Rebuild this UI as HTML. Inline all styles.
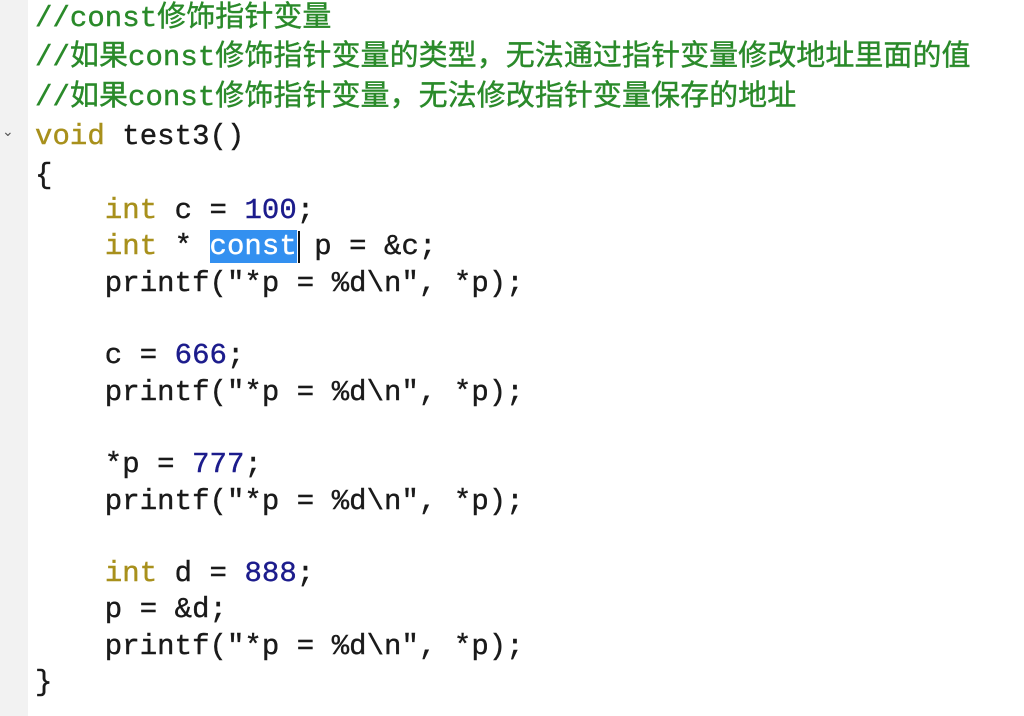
<!DOCTYPE html>
<html><head><meta charset="utf-8"><style>
html,body{margin:0;padding:0;width:1024px;height:716px;overflow:hidden;background:#fff}
.g{position:absolute;left:0;top:0;width:28px;height:716px;background:#f2f2f2}
.l{position:absolute;left:35px;white-space:pre;font-family:"Liberation Mono","Noto Sans CJK SC",monospace;font-size:29px;line-height:36px;color:#1a1a1a;letter-spacing:0.05px;-webkit-text-stroke:0.4px currentColor}
.c{color:#2a8a2a}
.k{color:#a8901c}
.n{color:#1c1c8c}
.s{background:#3390f0;color:#fff}
.ar{position:absolute;left:2px;top:124px;font-family:"DejaVu Sans",sans-serif;font-size:14px;color:#555}
.cur{position:absolute;left:298px;top:231px;width:2px;height:32px;background:#111}
</style></head><body>
<div class="g"></div>
<div class="ar">&#8964;</div>
<div class="l c" style="top:1px">//const修饰指针变量</div>
<div class="l c" style="top:40px">//如果const修饰指针变量的类型，无法通过指针变量修改地址里面的值</div>
<div class="l c" style="top:80px">//如果const修饰指针变量，无法修改指针变量保存的地址</div>
<div class="l" style="top:119px"><span class="k">void</span> test3()</div>
<div class="l" style="top:158px">{</div>
<div class="l" style="top:193px">    <span class="k">int</span> c = <span class="n">100</span>;</div>
<div class="l" style="top:229px">    <span class="k">int</span> * <span class="s">const</span> p = &amp;c;</div>
<div class="l" style="top:266px">    printf("*p = %d\n", *p);</div>
<div class="l" style="top:338px">    c = <span class="n">666</span>;</div>
<div class="l" style="top:375px">    printf("*p = %d\n", *p);</div>
<div class="l" style="top:447px">    *p = <span class="n">777</span>;</div>
<div class="l" style="top:484px">    printf("*p = %d\n", *p);</div>
<div class="l" style="top:556px">    <span class="k">int</span> d = <span class="n">888</span>;</div>
<div class="l" style="top:592px">    p = &amp;d;</div>
<div class="l" style="top:629px">    printf("*p = %d\n", *p);</div>
<div class="l" style="top:665px">}</div>
<div class="cur"></div>
</body></html>
